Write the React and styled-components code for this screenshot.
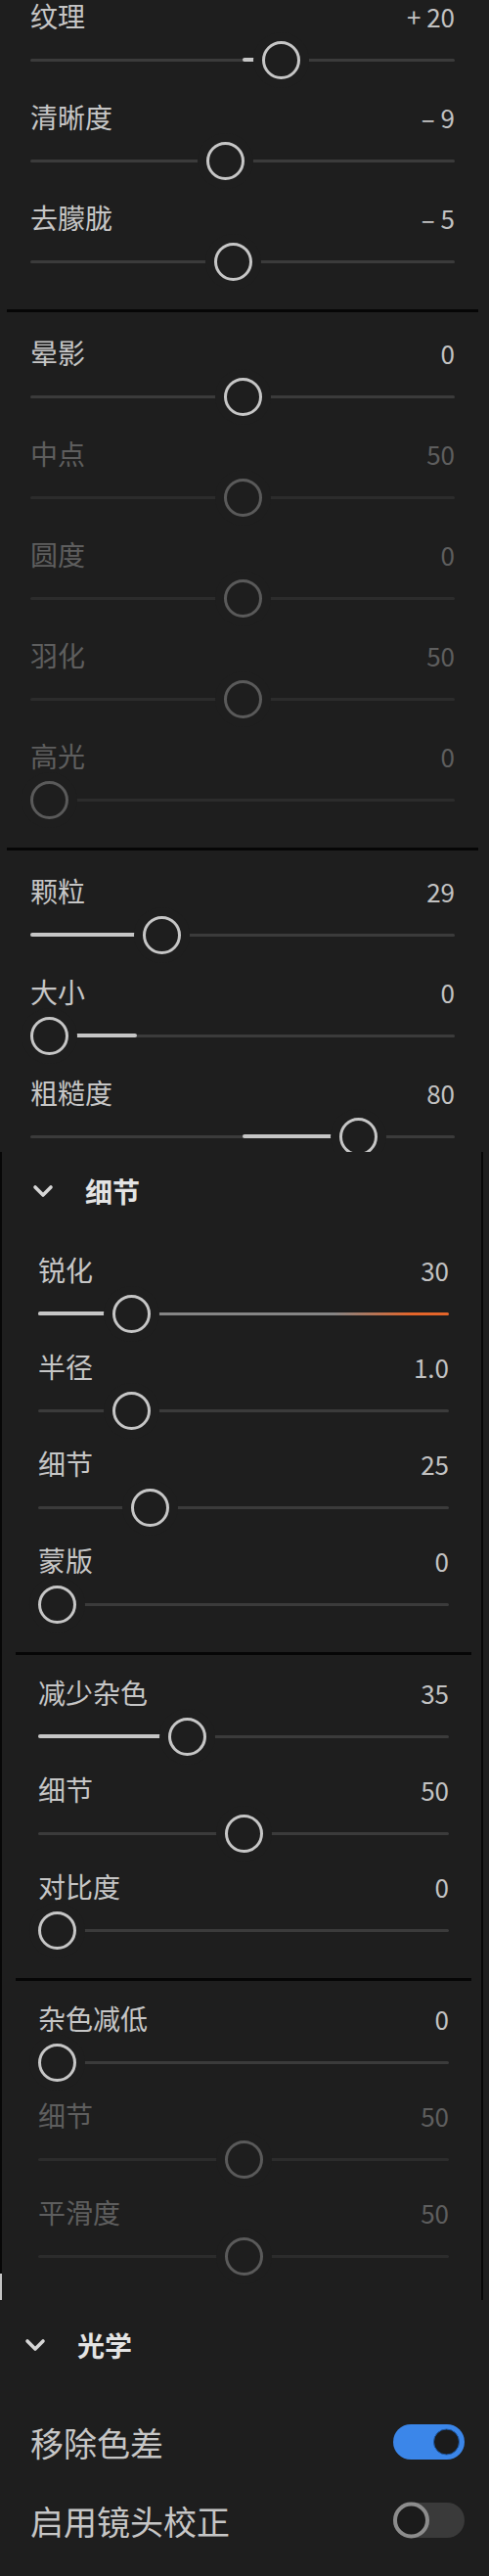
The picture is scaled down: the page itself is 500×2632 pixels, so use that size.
import React from "react";
import styled, { createGlobalStyle, css } from "styled-components";

const GlobalStyle = createGlobalStyle`
  html, body {
    margin: 0;
    padding: 0;
    background: #1e1e1e;
  }
  body {
    font-family: "Noto Sans CJK SC", "Noto Sans", sans-serif;
    -webkit-font-smoothing: antialiased;
  }
`;

const Page = styled.div`
  width: 500px;
  min-height: 2632px;
  background: #1e1e1e;
  color: #c6c6c6;
`;

// top half: the basic panel, cut where the second capture starts
const TopSection = styled.section`
  --pad-l: 31px;
  --pad-r: 35px;
  --div-l: 7px;
  --div-r: 11px;
  --div-mt: 7px;
  --div-mb: 25px;
  --row-pb: 22px;
  height: 1177px;
  overflow: hidden;
`;

const DetailPanel = styled.section`
  --pad-l: 37px;
  --pad-r: 33px;
  --div-l: 14px;
  --div-r: 10px;
  --div-mt: 11px;
  --div-mb: 22px;
  --row-pb: 18px;
  position: relative;
  width: 494px;
  height: 1173px;
  padding-top: 22px;
  box-sizing: border-box;
  border-left: 2px solid #070707;
  border-right: 2px solid #070707;

  &::after {
    content: "";
    position: absolute;
    left: -2px;
    bottom: 0;
    width: 2px;
    height: 27px;
    background: #c4c4c4;
  }
`;

const Divider = styled.div`
  height: 3px;
  background: #060606;
  margin: var(--div-mt) var(--div-r) var(--div-mb) var(--div-l);
`;

const Row = styled.div`
  padding: 0 var(--pad-r) var(--row-pb) var(--pad-l);
`;

const RowHead = styled.div`
  display: flex;
  justify-content: space-between;
  align-items: baseline;
  height: 32px;
  line-height: 32px;
  margin-bottom: 9px;
`;

const Label = styled.span`
  font-size: 28px;
  color: ${(p) => (p.$disabled ? "#5e5e5e" : "#c6c6c6")};
`;

const Value = styled.span`
  font-size: 26px;
  color: ${(p) => (p.$disabled ? "#5e5e5e" : "#c2c2c2")};
`;

const SliderBox = styled.div`
  position: relative;
  height: 40px;
`;

const TrackLine = styled.div`
  position: absolute;
  left: 0;
  right: 0;
  top: 50%;
  height: 3px;
  margin-top: -1.5px;
  border-radius: 2px;
  background: ${(p) => p.$bg};
`;

const Fill = styled.div`
  position: absolute;
  top: -0.5px;
  height: 4px;
  border-radius: 2px;
  background: #c6c6c6;
`;

const Thumb = styled.div`
  position: absolute;
  top: 0.5px;
  width: 39px;
  height: 39px;
  box-sizing: border-box;
  border-radius: 50%;
  border: 3.5px solid ${(p) => (p.$disabled ? "#5a5a5a" : "#c6c6c6")};
  background: #1e1e1e;
  box-shadow: 0 0 0 9px #1e1e1e;
`;

const SectionHeader = styled.div`
  display: flex;
  align-items: center;
  gap: 32px;
  height: 36px;
  padding-left: ${(p) => p.$indent}px;
  margin-bottom: ${(p) => p.$mb}px;
`;

const HeaderTitle = styled.span`
  font-size: 28px;
  font-weight: 700;
  color: #e4e4e4;
  line-height: 36px;
`;

const OpticsSection = styled.section`
  padding: 28px 0 17px;
`;

const ToggleRow = styled.div`
  display: flex;
  align-items: center;
  justify-content: space-between;
  height: 80px;
  padding: 0 25px 0 31px;
`;

const ToggleLabel = styled.span`
  font-size: 34px;
  color: #c6c6c6;
`;

const Switch = styled.span`
  position: relative;
  display: block;
  width: 73px;
  height: 36px;
  border-radius: 18px;
  background: ${(p) => (p.$on ? "#3b86e9" : "#3a3a3a")};
`;

const Knob = styled.span`
  position: absolute;
  top: 50%;
  transform: translateY(-50%);
  box-sizing: border-box;
  border-radius: 50%;
  background: #1b1b1b;
  ${(p) =>
    p.$on
      ? css`
          right: 5px;
          width: 27px;
          height: 27px;
          border: 1.5px solid #1d5aa8;
        `
      : css`
          left: -0.5px;
          width: 37px;
          height: 37px;
          border: 4px solid #8c8c8c;
        `}
`;

const SHARPEN_TRACK =
  "linear-gradient(to right, #858585 0%, #858585 72%, #e4652a 91%, #e4652a 100%)";

const topGroups = [
  [
    { label: "纹理", value: "+ 20", t: 0.6, fill: [0.5, 0.6] },
    { label: "清晰度", value: "– 9", t: 0.455 },
    { label: "去朦胧", value: "– 5", t: 0.475 },
  ],
  [
    { label: "晕影", value: "0", t: 0.5 },
    { label: "中点", value: "50", t: 0.5, disabled: true },
    { label: "圆度", value: "0", t: 0.5, disabled: true },
    { label: "羽化", value: "50", t: 0.5, disabled: true },
    { label: "高光", value: "0", t: 0, disabled: true },
  ],
  [
    { label: "颗粒", value: "29", t: 0.29, fill: [0, 0.29] },
    { label: "大小", value: "0", t: 0, fill: [0, 0.25] },
    { label: "粗糙度", value: "80", t: 0.8, fill: [0.5, 0.8] },
  ],
];

const detailGroups = [
  [
    { label: "锐化", value: "30", t: 0.2, fill: [0, 0.2], track: SHARPEN_TRACK },
    { label: "半径", value: "1.0", t: 0.2 },
    { label: "细节", value: "25", t: 0.25 },
    { label: "蒙版", value: "0", t: 0 },
  ],
  [
    { label: "减少杂色", value: "35", t: 0.35, fill: [0, 0.35] },
    { label: "细节", value: "50", t: 0.5 },
    { label: "对比度", value: "0", t: 0 },
  ],
  [
    { label: "杂色减低", value: "0", t: 0 },
    { label: "细节", value: "50", t: 0.5, disabled: true },
    { label: "平滑度", value: "50", t: 0.5, disabled: true },
  ],
];

function Chevron() {
  return (
    <svg width="22" height="14" viewBox="0 0 22 14">
      <polyline
        points="3,3 11,11 19,3"
        fill="none"
        stroke="#d6d6d6"
        strokeWidth="3.6"
        strokeLinecap="round"
        strokeLinejoin="round"
      />
    </svg>
  );
}

function SliderRow({ label, value, t, fill, track, disabled }) {
  const bg = track || (disabled ? "#2c2c2c" : "#3b3b3b");
  return (
    <Row>
      <RowHead>
        <Label $disabled={disabled}>{label}</Label>
        <Value $disabled={disabled}>{value}</Value>
      </RowHead>
      <SliderBox>
        <TrackLine $bg={bg}>
          {fill && (
            <Fill
              style={{
                left: `${fill[0] * 100}%`,
                width: `${(fill[1] - fill[0]) * 100}%`,
              }}
            />
          )}
        </TrackLine>
        <Thumb $disabled={disabled} style={{ left: `calc(${t} * (100% - 39px))` }} />
      </SliderBox>
    </Row>
  );
}

function Groups({ groups }) {
  return groups.map((rows, gi) => (
    <React.Fragment key={gi}>
      {gi > 0 && <Divider />}
      <div>
        {rows.map((r, i) => (
          <SliderRow key={i} {...r} />
        ))}
      </div>
    </React.Fragment>
  ));
}

export default function App() {
  return (
    <Page>
      <GlobalStyle />
      <TopSection>
        <Groups groups={topGroups} />
      </TopSection>

      <DetailPanel>
        <SectionHeader $indent={31} $mb={46}>
          <Chevron />
          <HeaderTitle>细节</HeaderTitle>
        </SectionHeader>
        <Groups groups={detailGroups} />
      </DetailPanel>

      <OpticsSection>
        <SectionHeader $indent={25} $mb={41}>
          <Chevron />
          <HeaderTitle>光学</HeaderTitle>
        </SectionHeader>
        <ToggleRow>
          <ToggleLabel>移除色差</ToggleLabel>
          <Switch $on>
            <Knob $on />
          </Switch>
        </ToggleRow>
        <ToggleRow>
          <ToggleLabel>启用镜头校正</ToggleLabel>
          <Switch>
            <Knob />
          </Switch>
        </ToggleRow>
      </OpticsSection>
    </Page>
  );
}
